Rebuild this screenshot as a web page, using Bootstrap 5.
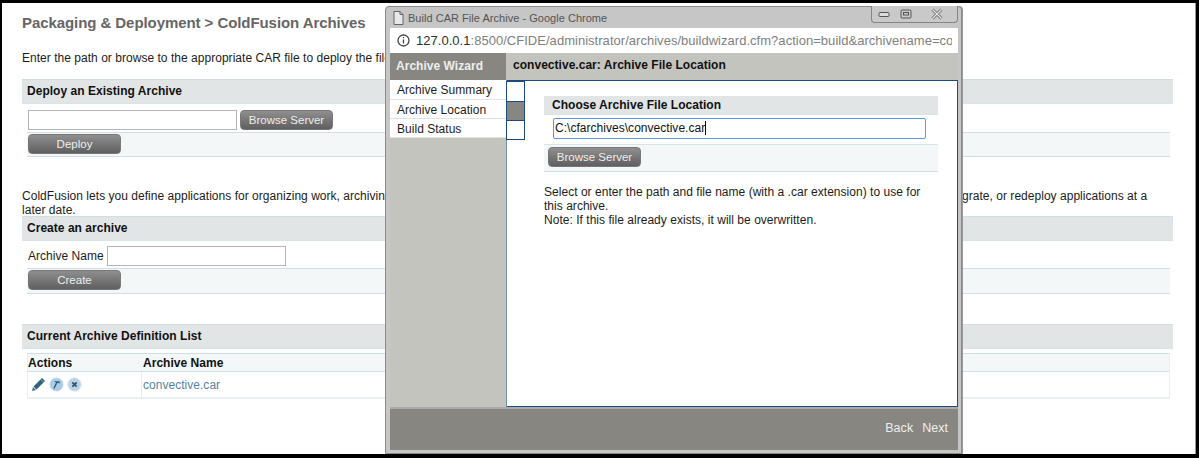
<!DOCTYPE html>
<html lang="en">
<head>
<meta charset="utf-8">
<title>ColdFusion Archives</title>
<link href="https://cdn.jsdelivr.net/npm/bootstrap@5.3.0/dist/css/bootstrap.min.css" rel="stylesheet">
<style>
html,body{height:458px;overflow:hidden}
body{background:#fff;font-family:"Liberation Sans",Arial,sans-serif;font-size:12px;line-height:14px;color:#1c1c1c;letter-spacing:.03px}
.frame-shot{position:relative;height:458px;width:1199px;border:solid #000;border-width:3px 3px 4px 2px;box-shadow:inset -1px 0 0 #999;overflow:hidden;background:#fff}
.page-wrap{padding:10px 23px 0 20px}
.page-title{font-size:15px;line-height:20px;font-weight:700;color:#666;margin:0 0 18px;letter-spacing:-.07px}
.para{margin:0}
.para-one{margin-bottom:14px;line-height:14px}
.sec-head{height:25px;background:#e1e5e5;border-top:1px solid #cfdfe2;border-bottom:1px solid #d8e4e6;font-weight:700;padding-left:5px;line-height:22px;color:#111}
.sec-head-gap{margin-top:30px}
.tf{height:20px;background:#fff;border:1px solid #b5b5b5;padding:0 1px;display:block}
.tf-a{width:209px}
.tf-b{width:179px;margin-left:3px}
.row-top{margin-top:6px;height:22px;padding-left:6px;align-items:flex-start}
.row-top-b{margin-top:5px;line-height:20px}
.row-tint{margin:0 3px 0 5px;background:#f3f7f7;border-top:1px solid #cfdfe2;border-bottom:1px solid #cfdfe2;height:25px;padding:1px}
.row-tint-tall{height:26px}
.gbtn{display:block;height:20px;border-radius:4px;border:1px solid #777;background:linear-gradient(#8f8f8f,#5f5f5f);color:#eee;font-size:11.500px;line-height:18px;padding:0;text-align:center}
.gbtn-wide{width:93px}
.gbtn-b{width:93px;margin-left:3px}
.para-two{margin-top:32px;height:27px;line-height:14px}
.arch-tbl{margin:4px 3px 0 5px;border-top:1px solid #cfdfe2;border-bottom:2px solid #eaf0f1;border-right:1px solid #eaf0f1;border-left:1px solid #eaf0f1;height:46px}
.arch-hd{height:18px;background:#f3f7f7;border-bottom:1px solid #d3e0e3;font-weight:700;line-height:18px;color:#111}
.arch-c1{width:113px}
.arch-c2{padding-left:1px}
.arch-hd .arch-c2{padding-left:2px}
.arch-bd{height:26px;line-height:27px}
.arch-bd .arch-c2{border-left:1px solid #e4ecee;color:#5682a5}
.arch-bd .arch-c1{padding-left:3px;gap:3px;padding-top:5px}
.ico{display:block}
.win{position:absolute;left:383px;top:3px;width:577px;height:448px;background:#c6c6c6;border:1px solid #8a8a8a;border-radius:4px 4px 0 0;box-shadow:1px 0 0 #999;padding:0 3px 2px 4px}
.win-title{height:21px;color:#555;font-size:11px;padding-left:3px;gap:4px}
.win-ctrl{position:absolute;right:3px;top:-1px;width:87px;height:17px;border:1px solid #858585;border-top:0;border-radius:0 0 4px 4px;background:#c9c9c9;align-items:center;padding-left:6px}
.ctrl-m{margin-left:10px}
.ctrl-x{margin-left:18px}
.win-addr{height:25px;background:#fff;font-size:13px;color:#808080;white-space:nowrap;overflow:hidden;padding:0 6px 0 7px;gap:6px;line-height:24px}
.win-addr b{font-weight:400;color:#303030}
.addr-clip{overflow:hidden}
.wz-head{height:27px;background:#c4c4be}
.wz-side-title{width:116px;flex:none;background:#878681;color:#eee;font-weight:700;line-height:27px;padding-left:6px}
.wz-main-title{font-weight:700;line-height:25px;padding-left:7px;color:#111;flex:1}
.wz-body{height:327px}
.wz-side{width:117px;flex:none;background:#c4c4be;border-right:1px solid #6f8db0}
.wz-item{height:20px;background:#fff;border-bottom:1px solid #e2e2e2;line-height:20px;padding-left:7px;color:#1c1c1c}
.wz-item-c{height:19px}
.wz-pane{flex:1;min-width:0;background:#fff;border:1px solid #1f4a7d;border-left:0;position:relative;padding:15px 19px 0 37px}
.wz-tabs{position:absolute;left:-1px;top:0;width:19px;height:59px;border:1px solid #1f4a7d}
.wz-tab-on{height:20px;margin-top:19px;background:#878681;border-top:1px solid #1f4a7d;border-bottom:1px solid #1f4a7d}
.sub-head{height:19px;background:#e1e5e5;border-bottom:1px solid #d8e4e6;font-weight:700;line-height:18px;padding-left:8px;color:#111}
.tf-focus{width:373px;height:21px;margin:3px 0 5px 9px;border:1px solid #5b97e6;border-radius:2px;padding:0 1px;font-size:12px;line-height:19px;color:#111;background:#fff}
.tf-caret{border-right:1px solid #000}
.sub-tint{height:28px;background:#f3f7f7;border-top:1px solid #d8e4e6;border-bottom:1px solid #cfdfe2;padding:2px 0 0 4px}
.para-three{margin:13px 0 0}
.wz-foot{height:43px;background:#878681;border-top:2px solid #aaa;color:#eee;font-size:12.500px;justify-content:flex-end;gap:9px;line-height:38px;padding-right:10px}
</style>
</head>
<body>
<div class="frame-shot">
  <div class="page-wrap">
    <h1 class="page-title">Packaging &amp; Deployment &gt; ColdFusion Archives</h1>
    <p class="para para-one">Enter the path or browse to the appropriate CAR file to deploy the file.</p>
    <div class="sec-head">Deploy an Existing Archive</div>
    <div class="d-flex row-top">
      <input class="tf tf-a" type="text" aria-label="Archive path">
      <button class="gbtn gbtn-b" type="button">Browse Server</button>
    </div>
    <div class="row-tint"><button class="gbtn gbtn-wide" type="button">Deploy</button></div>
    <p class="para para-two">ColdFusion lets you define applications for organizing work, archiving, and deploying applications and all their related configuration settings in one single file, so you can later migrate, or redeploy applications at a later date.</p>
    <div class="sec-head">Create an archive</div>
    <div class="d-flex row-top row-top-b">
      <span>Archive Name</span>
      <input class="tf tf-b" type="text" aria-label="Archive Name">
    </div>
    <div class="row-tint row-tint-tall"><button class="gbtn gbtn-wide" type="button">Create</button></div>
    <div class="sec-head sec-head-gap">Current Archive Definition List</div>
    <div class="arch-tbl">
      <div class="d-flex arch-hd"><div class="arch-c1">Actions</div><div class="arch-c2">Archive Name</div></div>
      <div class="d-flex arch-bd">
        <div class="arch-c1 d-flex align-items-start">
          <svg class="ico" width="15" height="15" viewBox="0 0 15 15"><path d="M11 1l3 3-8.500 8.500-3-3z" fill="#2f6478"/><path d="M1 14l1-4 3 3z" fill="#3c7388"/><path d="M10 2.500l2.600 2.600" stroke="#a9c6d2" stroke-width=".8"/></svg>
          <svg class="ico" width="15" height="15" viewBox="0 0 16 16"><circle cx="8" cy="8" r="7" fill="#a9cde8" stroke="#c5d7e4"/><path d="M5 4.500h6l1 2.500-3-1-3.200 6.500-1.200-.6L7.500 5.800z" fill="#2a5d78"/></svg>
          <svg class="ico" width="15" height="15" viewBox="0 0 16 16"><circle cx="8" cy="8" r="7" fill="#bcd3e6" stroke="#d2dfe9"/><path d="M5.700 5.700l4.600 4.600M10.300 5.700l-4.600 4.600" stroke="#2a5570" stroke-width="1.900"/></svg>
        </div>
        <div class="arch-c2 flex-grow-1">convective.car</div>
      </div>
    </div>
  </div>

  <div class="win">
    <div class="win-title d-flex align-items-center">
      <svg width="11" height="14" viewBox="0 0 11 14"><path d="M1 .5h6l3 3v10H1z" fill="#e8e8e8" stroke="#666"/><path d="M7 .5v3h3" fill="none" stroke="#666"/></svg>
      <span>Build CAR File Archive - Google Chrome</span>
    </div>
    <div class="win-ctrl d-flex">
      <svg width="12" height="8" viewBox="0 0 12 8"><rect x="1" y="2.500" width="10" height="4" rx="1" fill="#ddd" stroke="#555"/></svg>
      <svg class="ctrl-m" width="12" height="10" viewBox="0 0 12 10"><rect x="1" y="1" width="10" height="8" rx="1" fill="none" stroke="#555"/><rect x="3.500" y="3.500" width="5" height="2.500" fill="none" stroke="#555"/></svg>
      <svg class="ctrl-x" width="14" height="12" viewBox="0 0 14 12"><path d="M2.500 1.500l9 9M11.500 1.500l-9 9" stroke="#6f6f6f" stroke-width="3"/><path d="M2.500 1.500l9 9M11.500 1.500l-9 9" stroke="#e4e4e4" stroke-width="1.200"/></svg>
    </div>
    <div class="win-addr d-flex align-items-center">
      <svg class="flex-shrink-0" width="13" height="13" viewBox="0 0 13 13"><circle cx="6.500" cy="6.500" r="5.500" fill="none" stroke="#444" stroke-width="1.300"/><path d="M6.500 5.500v4M6.500 3v1.300" stroke="#444" stroke-width="1.300"/></svg>
      <span class="addr-clip"><b>127.0.0.1</b>:8500/CFIDE/administrator/archives/buildwizard.cfm?action=build&amp;archivename=con</span>
    </div>
    <div class="wz-head d-flex">
      <div class="wz-side-title">Archive Wizard</div>
      <div class="wz-main-title">convective.car: Archive File Location</div>
    </div>
    <div class="wz-body d-flex">
      <div class="wz-side">
        <div class="wz-item">Archive Summary</div>
        <div class="wz-item wz-item-c">Archive Location</div>
        <div class="wz-item wz-item-c">Build Status</div>
      </div>
      <div class="wz-pane">
        <div class="wz-tabs"><div class="wz-tab-on"></div></div>
        <div class="sub-head">Choose Archive File Location</div>
        <div class="tf-focus"><span class="tf-caret">C:\cfarchives\convective.car</span></div>
        <div class="sub-tint"><button class="gbtn gbtn-wide" type="button">Browse Server</button></div>
        <p class="para para-three">Select or enter the path and file name (with a .car extension) to use for this archive.<br>Note: If this file already exists, it will be overwritten.</p>
      </div>
    </div>
    <div class="wz-foot d-flex"><span>Back</span><span>Next</span></div>
  </div>
</div>
<script src="https://cdn.jsdelivr.net/npm/bootstrap@5.3.0/dist/js/bootstrap.bundle.min.js"></script>
</body>
</html>
